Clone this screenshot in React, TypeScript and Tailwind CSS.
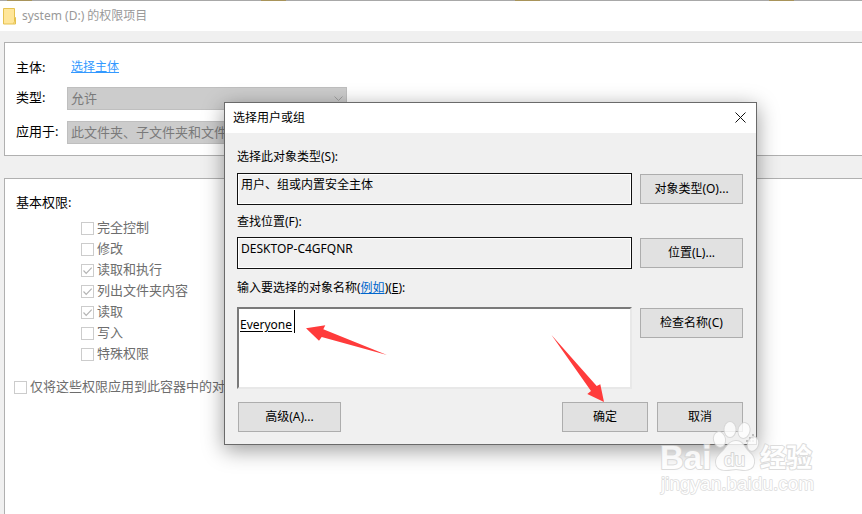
import { useState } from "react";
import type { ReactNode } from "react";
import clsx from "clsx";

const permissions = [
  { id: "full", label: "完全控制", checked: false },
  { id: "modify", label: "修改", checked: false },
  { id: "execute", label: "读取和执行", checked: true },
  { id: "list", label: "列出文件夹内容", checked: true },
  { id: "read", label: "读取", checked: true },
  { id: "write", label: "写入", checked: false },
  { id: "special", label: "特殊权限", checked: false },
];

function FolderIcon() {
  return (
    <svg width="14" height="17" viewBox="0 0 14 17" aria-hidden="true">
      <path d="M.5.5h11v9h1v6.5H.5z" fill="#ffe69a" stroke="#e5c14f" />
      <path d="M11.5 9.5v4l-1 2" fill="none" stroke="#e5c14f" />
    </svg>
  );
}

function CheckBox({
  id,
  label,
  checked = false,
}: {
  id: string;
  label: string;
  checked?: boolean;
}) {
  return (
    <div className="flex h-[21px] gap-[3px]">
      <span className="relative flex self-center">
        <input
          id={id}
          type="checkbox"
          disabled
          defaultChecked={checked}
          className="h-[13px] w-[13px] appearance-none border border-[#cccccc] bg-white"
        />
        {checked && (
          <svg
            width="13"
            height="13"
            viewBox="0 0 13 13"
            className="pointer-events-none absolute inset-0"
            aria-hidden="true"
          >
            <path
              d="M2.5 6.5l2.7 2.8L10.7 3.6"
              fill="none"
              stroke="#b4b4b4"
              strokeWidth="1.2"
            />
          </svg>
        )}
      </span>
      <label htmlFor={id} className="whitespace-nowrap leading-[18px] text-[#6d6d6d]">
        {label}
      </label>
    </div>
  );
}

function SelectRow({
  id,
  label,
  value,
}: {
  id: string;
  label: string;
  value: string;
}) {
  return (
    <div className="flex items-start">
      <label htmlFor={id} className="w-[51px] shrink-0">
        {label}
      </label>
      <div className="relative flex w-[280px]">
        <select
          id={id}
          disabled
          className="h-[23px] w-full appearance-none border border-[#bfbfbf] bg-[#cccccc] pb-[2px] pl-[3px] text-[#7a7a7a] opacity-100"
        >
          <option>{value}</option>
        </select>
        <svg
          width="9"
          height="6"
          viewBox="0 0 9 6"
          className="pointer-events-none absolute right-1 top-[9px]"
          aria-hidden="true"
        >
          <path d="M.5.5l4 4 4-4" fill="none" stroke="#a0a0a0" />
        </svg>
      </div>
    </div>
  );
}

function PushButton({
  children,
  className,
}: {
  children: ReactNode;
  className?: string;
}) {
  return (
    <button
      type="button"
      className={clsx(
        "h-[30px] border border-[#adadad] bg-[#e1e1e1] text-center hover:border-[#0078d7] hover:bg-[#e5f1fb]",
        className
      )}
    >
      {children}
    </button>
  );
}

function ReadOnlyField({ id, value }: { id: string; value: string }) {
  return (
    <input
      id={id}
      type="text"
      readOnly
      value={value}
      className="h-8 w-full border border-[#111111] bg-[#f0f0f0] pb-[10px] pl-[3px] shadow-[inset_0_0_0_1px_#ffffff] outline-none"
    />
  );
}

function PickerDialog() {
  const [names, setNames] = useState("Everyone");

  return (
    <div
      role="dialog"
      aria-labelledby="picker-title"
      className="absolute left-[224px] top-[102px] w-[533px] border border-[#6a6a6a] bg-[#f0f0f0] text-[12px] leading-4 text-black shadow-[0_5px_20px_rgba(0,0,0,0.4)]"
    >
      <div className="flex h-[30px] items-center justify-between bg-white pl-2 pr-[10px]">
        <h2 id="picker-title">选择用户或组</h2>
        <button type="button" aria-label="关闭">
          <svg width="11" height="12" viewBox="0 0 11 12" aria-hidden="true">
            <path d="M.5.5l10 10M10.5.5l-10 10" stroke="#111111" />
          </svg>
        </button>
      </div>

      <div className="pb-3 pl-3 pr-[13px] pt-2">
        <div className="grid grid-cols-[1fr_103px] gap-x-2">
          <label htmlFor="object-type" className="col-span-2 flex h-8 items-center">
            选择此对象类型(S):
          </label>
          <ReadOnlyField id="object-type" value="用户、组或内置安全主体" />
          <PushButton className="self-center">对象类型(O)...</PushButton>

          <label htmlFor="location" className="col-span-2 flex h-8 items-center pt-[2px]">
            查找位置(F):
          </label>
          <ReadOnlyField id="location" value="DESKTOP-C4GFQNR" />
          <PushButton className="self-center">位置(L)...</PushButton>

          <label htmlFor="names" className="col-span-2 flex h-[38px] items-center">
            输入要选择的对象名称(
            <a href="#example" className="text-[#0066cc] underline">
              例如
            </a>
            )(<u>E</u>):
          </label>
          <div className="relative flex">
            <textarea
              id="names"
              value={names}
              spellCheck={false}
              onChange={(e) => setNames(e.target.value)}
              className="h-[82px] w-full resize-none border-2 border-b-[#e8e8e8] border-l-[#7a7a7a] border-r-[#e8e8e8] border-t-[#7a7a7a] bg-white px-px pt-2 underline underline-offset-2 outline-none"
            />
            {/* text cursor */}
            <span className="pointer-events-none absolute left-[57px] top-[3px] h-[23px] w-px bg-black" />
          </div>
          <PushButton className="mt-px">检查名称(C)</PushButton>
        </div>

        <div className="flex gap-[9px] pl-px pt-[13px]">
          <PushButton className="mr-auto w-[103px]">高级(A)...</PushButton>
          <PushButton className="w-[86px]">确定</PushButton>
          <PushButton className="w-[86px]">取消</PushButton>
        </div>
      </div>

      {/* resize grip */}
      <svg
        width="8"
        height="8"
        viewBox="0 0 8 8"
        className="absolute bottom-[2px] right-[2px]"
        aria-hidden="true"
      >
        <path
          d="M6 0h2v2H6zM3 3h2v2H3zM6 3h2v2H6zM0 6h2v2H0zM3 6h2v2H3zM6 6h2v2H6z"
          fill="#bfbfbf"
        />
      </svg>

      {/* pointer arrows */}
      <svg
        width="533"
        height="343"
        viewBox="224 102 533 343"
        className="pointer-events-none absolute -left-px -top-px"
        aria-hidden="true"
      >
        <g fill="#ff3b3b">
          <path d="M306 328.3l19.3-3-2 4L387 355l-65.3-18-2.7 3.7z" />
          <path d="M551.5 335l45.2 51 3.6-1.7L604 402l-16.7-8 3.7-3z" />
        </g>
      </svg>
    </div>
  );
}

function Watermark() {
  return (
    <svg
      width="162"
      height="80"
      viewBox="656 418 162 80"
      className="pointer-events-none absolute left-[656px] top-[418px]"
      aria-hidden="true"
    >
      <g
        fill="#ffffff"
        stroke="#d4d4d4"
        strokeWidth="2"
        strokeLinejoin="round"
        opacity="0.8"
        className="[paint-order:stroke]"
      >
        <text
          x="660"
          y="469"
          fontSize="33"
          fontWeight="700"
          className="font-['Liberation_Sans',sans-serif]"
        >
          Bai
        </text>
        <ellipse cx="719.5" cy="439.5" rx="5.5" ry="7.5" transform="rotate(-12 719.5 439.5)" />
        <ellipse cx="730" cy="429.5" rx="5.5" ry="7.5" />
        <ellipse cx="744" cy="430.5" rx="5.5" ry="7.5" transform="rotate(12 744 430.5)" />
        <ellipse cx="753" cy="444" rx="5" ry="7" transform="rotate(20 753 444)" />
        <path d="M736 441c6 0 8 5 11 9 4 4 8 7 7 13-1 6-6 7-10 7-3 0-5-1-8-1s-6 1-10 1c-6 0-10-2-10-8 0-5 4-8 8-12 3-4 6-9 12-9z" />
        <text
          x="760"
          y="467"
          fontSize="26"
          fontWeight="700"
          className="font-['Noto_Sans_CJK_SC',sans-serif]"
        >
          经验
        </text>
        <text
          x="661"
          y="490"
          fontSize="19"
          strokeWidth="1.5"
          className="font-['Liberation_Sans',sans-serif]"
        >
          jingyan.baidu.com
        </text>
        <text
          x="724"
          y="466"
          fontSize="19"
          strokeWidth="2"
          className="font-['Liberation_Sans',sans-serif]"
        >
          du
        </text>
      </g>
    </svg>
  );
}

export default function App() {
  return (
    <div className="relative flex min-h-screen flex-col overflow-hidden bg-[#f0f0f0] font-['Noto_Sans','Noto_Sans_CJK_SC',sans-serif] text-[13px] leading-5 text-black">
      <div className="h-px bg-[repeating-linear-gradient(90deg,#a8a8a8_0_7px,#a8945a_7px_32px,#a8a8a8_32px_254px)]" />
      <header className="flex h-[30px] items-center gap-[5px] bg-white pl-[3px] text-[12px] text-[#999999]">
        <FolderIcon />
        <h1>system (D:) 的权限项目</h1>
      </header>

      <main className="flex grow flex-col gap-[22px] pl-1 pt-[11px]">
        <section className="flex flex-col gap-[11px] border-y border-l border-[#b0b0b0] bg-white pb-[11px] pl-[11px] pt-[14px]">
          <div className="flex h-[19px] items-center">
            <span className="w-[55px]">主体:</span>
            <a href="#principal" className="text-[12px] text-[#3399ff] underline">
              选择主体
            </a>
          </div>
          <SelectRow id="type" label="类型:" value="允许" />
          <SelectRow id="applies" label="应用于:" value="此文件夹、子文件夹和文件" />
        </section>

        <section className="grow border-l border-t border-[#b0b0b0] bg-white pl-[9px] pt-[13px]">
          <h2 className="pl-[2px]">基本权限:</h2>
          <div className="pl-[67px] pt-[6px]">
            {permissions.map((p) => (
              <CheckBox key={p.id} {...p} />
            ))}
          </div>
          <div className="pt-3">
            <CheckBox id="container-only" label="仅将这些权限应用到此容器中的对" />
          </div>
        </section>
      </main>

      <PickerDialog />
      <Watermark />
    </div>
  );
}
